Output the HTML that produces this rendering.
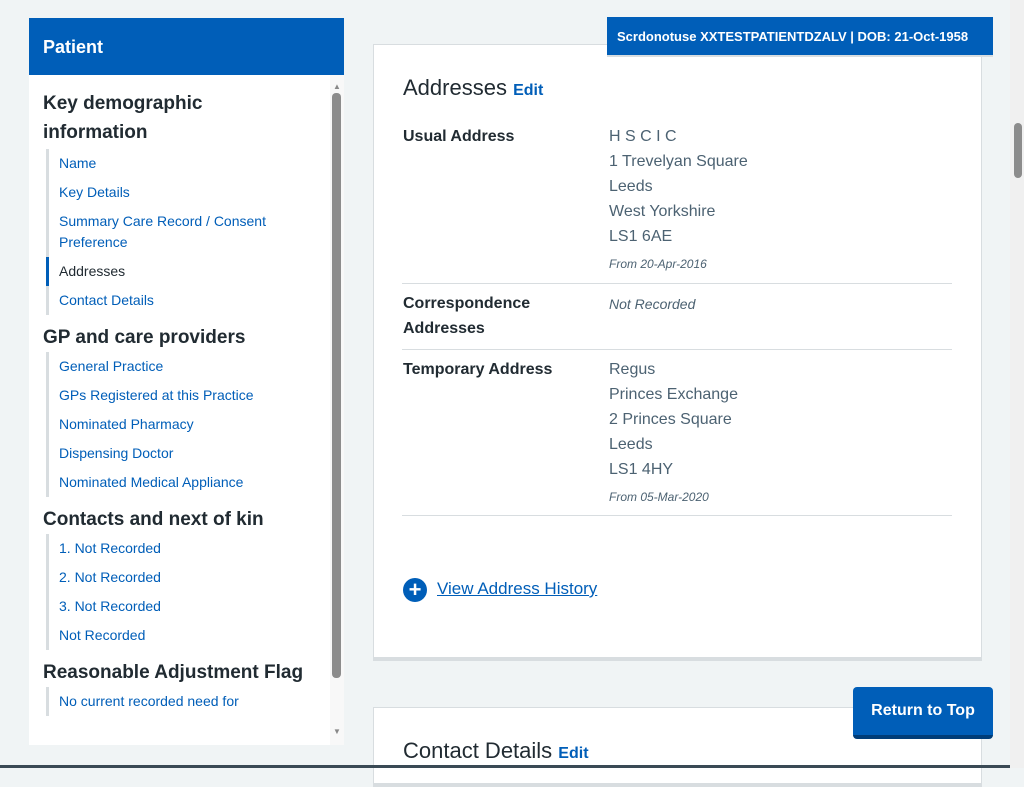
<!DOCTYPE html>
<html><head><meta charset="utf-8"><style>
*{margin:0;padding:0;box-sizing:border-box}
body{width:1024px;height:768px;overflow:hidden;background:#f0f4f5;font-family:"Liberation Sans",sans-serif;position:relative;color:#212b32}
.a{position:absolute}
.link{color:#005eb8}
.side{left:29px;top:18px;width:315px;height:727px;background:#fff}
.sh{height:57px;background:#005eb8;color:#fff;font-weight:bold;font-size:18px;padding:19px 14px}
.sec{font-size:19px;font-weight:bold;color:#212b32;line-height:29px}
.nav{border-left:3px solid #d8dde0;margin-left:17px;padding-left:10px}
.nav div{font-size:14px;color:#005eb8;line-height:21px;padding:4px 0}
.card{background:#fff;border:1px solid #d8dde0;border-bottom:4px solid #d8dde0}
.lab{font-size:16px;font-weight:bold;color:#212b32;line-height:25px}
.val{font-size:16px;color:#4c6272;line-height:25px}
.sm{font-size:12px;font-style:italic;color:#4c6272}
.hr{height:1px;background:#d8dde0;left:402px;width:550px}
</style></head><body>
<div class="a side">
<div class="sh">Patient</div>
<div style="padding:14px 14px 0">
<div class="sec">Key demographic<br>information</div>
<div class="nav" style="margin-left:3px;margin-top:2px">
<div>Name</div><div>Key Details</div><div>Summary Care Record / Consent Preference</div>
<div style="color:#212b32;font-weight:bold;border-left:3px solid #005eb8;margin-left:-13px;padding-left:10px;font-weight:normal">Addresses</div>
<div>Contact Details</div></div>
<div class="sec" style="margin-top:8px">GP and care providers</div>
<div class="nav" style="margin-left:3px"><div>General Practice</div><div>GPs Registered at this Practice</div><div>Nominated Pharmacy</div><div>Dispensing Doctor</div><div>Nominated Medical Appliance</div></div>
<div class="sec" style="margin-top:8px">Contacts and next of kin</div>
<div class="nav" style="margin-left:3px"><div>1. Not Recorded</div><div>2. Not Recorded</div><div>3. Not Recorded</div><div>Not Recorded</div></div>
<div class="sec" style="margin-top:8px">Reasonable Adjustment Flag</div>
<div class="nav" style="margin-left:3px"><div>No current recorded need for</div></div>
</div>
</div>
<div class="a" style="left:330px;top:75px;width:14px;height:670px;background:#f8f8f8"></div>
<div class="a" style="left:332px;top:93px;width:9px;height:585px;background:#8c8c8c;border-radius:4px"></div>
<div class="a" style="left:333px;top:82px;font-size:8px;color:#888">▲</div>
<div class="a" style="left:333px;top:727px;font-size:8px;color:#888">▼</div>

<div class="a card" style="left:373px;top:44px;width:609px;height:617px"></div>
<div class="a" style="left:607px;top:17px;width:386px;height:40px;background:#005eb8;color:#fff;font-weight:bold;font-size:13px;padding:12px 10px;border-bottom:2px solid #d8dde0">Scrdonotuse XXTESTPATIENTDZALV | DOB: 21-Oct-1958</div>
<div class="a" style="left:403px;top:75px;font-size:22px">Addresses <span class="link" style="font-size:16px;font-weight:bold">Edit</span></div>
<div class="a lab" style="left:403px;top:124px">Usual Address</div>
<div class="a val" style="left:609px;top:124px;letter-spacing:0">H S C I C<br>1 Trevelyan Square<br>Leeds<br>West Yorkshire<br>LS1 6AE</div>
<div class="a sm" style="left:609px;top:257px">From 20-Apr-2016</div>
<div class="a hr" style="top:283px"></div>
<div class="a lab" style="left:403px;top:291px">Correspondence<br>Addresses</div>
<div class="a sm" style="left:609px;top:296px;font-size:14px">Not Recorded</div>
<div class="a hr" style="top:349px"></div>
<div class="a lab" style="left:403px;top:357px">Temporary Address</div>
<div class="a val" style="left:609px;top:357px">Regus<br>Princes Exchange<br>2 Princes Square<br>Leeds<br>LS1 4HY</div>
<div class="a sm" style="left:609px;top:490px">From 05-Mar-2020</div>
<div class="a hr" style="top:515px"></div>
<div class="a" style="left:403px;top:578px;width:24px;height:24px;border-radius:50%;background:#005eb8;color:#fff;font-size:22px;font-weight:bold;line-height:23px;text-align:center">+</div>
<div class="a link" style="left:437px;top:579px;font-size:17px;text-decoration:underline">View Address History</div>

<div class="a card" style="left:373px;top:707px;width:609px;height:80px"></div>
<div class="a" style="left:403px;top:738px;font-size:22px">Contact Details <span class="link" style="font-size:16px;font-weight:bold">Edit</span></div>
<div class="a" style="left:853px;top:687px;width:140px;height:52px;background:#005eb8;border-radius:4px;border-bottom:4px solid #003d78;color:#fff;font-weight:bold;font-size:16px;text-align:center;line-height:48px">Return to Top</div>

<div class="a" style="left:1010px;top:0;width:14px;height:768px;background:#f0f0f0"></div>
<div class="a" style="left:1014px;top:123px;width:8px;height:55px;background:#8c8c8c;border-radius:4px"></div>
<div class="a" style="left:0;top:765px;width:1010px;height:3px;background:#3a4a55"></div>
</body></html>
